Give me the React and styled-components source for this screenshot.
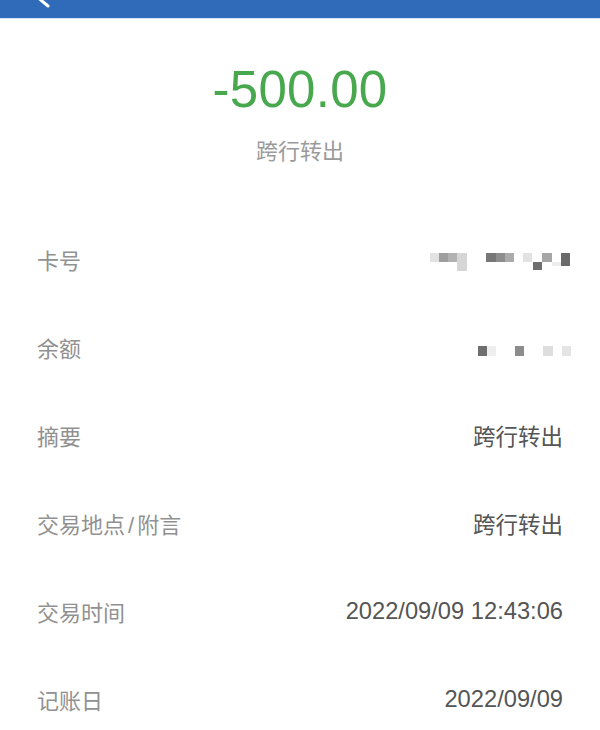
import React from 'react';
import styled, { createGlobalStyle } from 'styled-components';

const GlobalStyle = createGlobalStyle`
  html, body {
    margin: 0;
    padding: 0;
    background: #fff;
  }
  body {
    font-family: "Liberation Sans", "Noto Sans CJK SC", sans-serif;
  }
`;

const Page = styled.div`
  width: 600px;
  height: 730px;
  overflow: hidden;
  background: #fff;
`;

const NavBar = styled.div`
  height: 18px;
  background: #2f6bb9;
  border-bottom: 1px solid #d6e4f3;
  overflow: hidden;
`;

const BackIcon = styled.svg`
  display: block;
  width: 60px;
  height: 18px;
`;

const Hero = styled.div`
  display: flex;
  flex-direction: column;
  align-items: center;
  padding-top: 41px;
`;

const Amount = styled.div`
  font-size: 51px;
  line-height: 60px;
  letter-spacing: 0.3px;
  color: #47a84e;
`;

const Subtitle = styled.div`
  margin-top: 17px;
  font-size: 22px;
  line-height: 30px;
  color: #9a9a9a;
`;

const List = styled.div`
  margin-top: 48px;
  display: flex;
  flex-direction: column;
`;

const Row = styled.div`
  height: 88px;
  padding: 0 37px;
  display: flex;
  align-items: center;
  justify-content: space-between;
`;

const Label = styled.span`
  font-size: 22px;
  color: #919191;
`;

const Slash = styled.span`
  margin: 0 3px;
`;

const Value = styled.span`
  font-size: ${(p) => (p.$numeric ? '23.7px' : '22.5px')};
  color: #555;
`;

const Mosaic = styled.svg`
  display: block;
  margin-right: -8px;
  margin-top: ${(p) => p.$drop}px;
`;

const cardTiles = [
  [0, 0, 9, 9, '#e2e2e2'],
  [9, 0, 9, 9, '#9e9e9e'],
  [18, 0, 9, 9, '#b2b2b2'],
  [27, 0, 10, 18, '#d6d6d6'],
  [56, 0, 10, 9, '#777'],
  [66, 0, 9, 9, '#8d8d8d'],
  [75, 0, 9, 9, '#ababab'],
  [93, 0, 9, 9, '#e2e2e2'],
  [103, 9, 9, 8, '#6e6e6e'],
  [112, 0, 10, 9, '#a6a6a6'],
  [122, 9, 9, 4, '#ededed'],
  [131, 0, 9, 13, '#6a6a6a'],
];

const balanceTiles = [
  [0, 0, 9, 10, '#6f6f6f'],
  [9, 0, 9, 10, '#eeeeee'],
  [37, 0, 9, 10, '#8c8c8c'],
  [65, 0, 10, 10, '#dedede'],
  [84, 0, 9, 10, '#e4e4e4'],
];

const MosaicBlock = ({ tiles, width, height, drop }) => (
  <Mosaic width={width} height={height} viewBox={`0 0 ${width} ${height}`} $drop={drop}>
    {tiles.map(([x, y, w, h, fill], i) => (
      <rect key={i} x={x} y={y} width={w} height={h} fill={fill} />
    ))}
  </Mosaic>
);

const rows = [
  { label: '卡号', mosaic: { tiles: cardTiles, width: 141, height: 18, drop: 6 } },
  { label: '余额', mosaic: { tiles: balanceTiles, width: 93, height: 10, drop: 8 } },
  { label: '摘要', value: '跨行转出' },
  { label: ['交易地点', '附言'], value: '跨行转出' },
  { label: '交易时间', value: '2022/09/09 12:43:06', numeric: true },
  { label: '记账日', value: '2022/09/09', numeric: true },
];

const App = () => (
  <Page>
    <GlobalStyle />
    <NavBar>
      <BackIcon viewBox="0 0 60 18">
        <path d="M36 -4 L48 6" stroke="#fff" strokeWidth="3" strokeLinecap="round" fill="none" />
      </BackIcon>
    </NavBar>
    <Hero>
      <Amount>-500.00</Amount>
      <Subtitle>跨行转出</Subtitle>
    </Hero>
    <List>
      {rows.map((row) => {
        const key = Array.isArray(row.label) ? row.label.join('/') : row.label;
        return (
          <Row key={key}>
            <Label>
              {Array.isArray(row.label) ? (
                <>
                  {row.label[0]}
                  <Slash>/</Slash>
                  {row.label[1]}
                </>
              ) : (
                row.label
              )}
            </Label>
            {row.mosaic ? (
              <MosaicBlock {...row.mosaic} />
            ) : (
              <Value $numeric={row.numeric}>{row.value}</Value>
            )}
          </Row>
        );
      })}
    </List>
  </Page>
);

export default App;
